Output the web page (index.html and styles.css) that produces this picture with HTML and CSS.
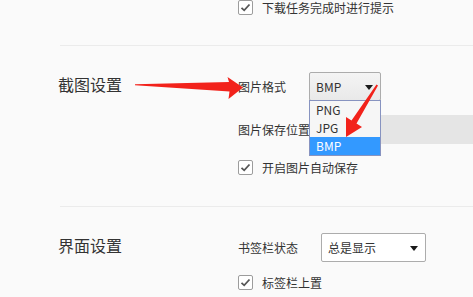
FILE: index.html
```html
<!DOCTYPE html>
<html lang="zh-CN">
<head>
<meta charset="utf-8">
<link rel="stylesheet" href="styles.css">
</head>
<body>
<div class="page">
  <section class="sec sec-top">
    <div class="side"></div>
    <div class="main">
      <div class="check-row check-first">
        <span class="cb"><svg width="13" height="13" viewBox="0 0 13 13"><path d="M2.5 6.8 L5.2 9.3 L10.5 3.5" fill="none" stroke="#555" stroke-width="1.8"/></svg></span>
        <span class="cb-text">下载任务完成时进行提示</span>
      </div>
    </div>
  </section>
  <div class="divider"></div>
  <section class="sec sec-shot">
    <div class="side"><h2 class="title">截图设置</h2></div>
    <div class="main">
      <div class="row">
        <span class="lbl">图片格式</span>
        <div class="select select-fmt">
          <span class="val">BMP</span><span class="caret"></span>
          <ul class="menu">
            <li>PNG</li>
            <li>JPG</li>
            <li class="on">BMP</li>
          </ul>
        </div>
      </div>
      <div class="row">
        <span class="lbl">图片保存位置</span>
        <div class="path"></div>
      </div>
      <div class="check-row">
        <span class="cb"><svg width="13" height="13" viewBox="0 0 13 13"><path d="M2.5 6.8 L5.2 9.3 L10.5 3.5" fill="none" stroke="#555" stroke-width="1.8"/></svg></span>
        <span class="cb-text">开启图片自动保存</span>
      </div>
    </div>
  </section>
  <div class="divider"></div>
  <section class="sec sec-ui">
    <div class="side"><h2 class="title">界面设置</h2></div>
    <div class="main">
      <div class="row">
        <span class="lbl">书签栏状态</span>
        <div class="select select-bar">
          <span class="val">总是显示</span><span class="caret"></span>
        </div>
      </div>
      <div class="check-row">
        <span class="cb"><svg width="13" height="13" viewBox="0 0 13 13"><path d="M2.5 6.8 L5.2 9.3 L10.5 3.5" fill="none" stroke="#555" stroke-width="1.8"/></svg></span>
        <span class="cb-text">标签栏上置</span>
      </div>
    </div>
  </section>
  <svg class="arrows" width="473" height="297" viewBox="0 0 473 297">
    <polygon points="135,84.2 229,82 227.5,77 243,87.5 228.5,99 229.5,91.5 135,85.2" fill="#f2221b"/>
    <polygon points="376.5,84.5 378,85.5 356.5,123.5 362,127 346,137 346,117 351.5,120.5" fill="#f2221b"/>
  </svg>
</div>
</body>
</html>
```

FILE: styles.css
```css
html, body {
  margin: 0;
  padding: 0;
  background: #fafafa;
}

.page {
  position: relative;
  width: 473px;
  height: 297px;
  overflow: hidden;
  background: #fafafa;
  font-family: "Noto Sans CJK SC", "Noto Sans", sans-serif;
  color: #333;
  font-size: 12px;
}

.sec {
  display: flex;
}

.side {
  width: 238px;
  flex: none;
  box-sizing: border-box;
  padding-left: 58px;
}

.main {
  flex: 1;
  display: flex;
  flex-direction: column;
}

.sec-top {
  padding-bottom: 30px;
}

.check-row.check-first {
  height: 15px;
}

.check-first .cb-text {
  line-height: 15px;
}

.sec-shot {
  padding-top: 26px;
  padding-bottom: 30px;
}

.sec-shot .main {
  gap: 14px;
}

.sec-shot .check-row {
  margin-top: 1px;
}

.sec-ui {
  padding-top: 26px;
}

.sec-ui .main {
  gap: 12px;
}

.divider {
  height: 1px;
  margin-left: 60px;
  background: #ebebeb;
}

.title {
  margin: -2px 0 0;
  font-size: 16px;
  font-weight: normal;
  line-height: 29px;
  color: #333;
}

.row {
  display: flex;
  align-items: center;
  height: 29px;
  gap: 23px;
}

.lbl {
  white-space: nowrap;
  line-height: 29px;
}

.select {
  position: relative;
  box-sizing: border-box;
  height: 29px;
  border: 1px solid #acacac;
  border-radius: 2px;
  display: flex;
  align-items: center;
  padding-left: 6px;
}

.select-fmt {
  width: 72px;
  background: linear-gradient(#f4f4f4, #e9e9e9);
}

.select-bar {
  width: 105px;
  background: #fff;
}

.caret {
  position: absolute;
  right: 7px;
  top: 12px;
  width: 0;
  height: 0;
  border-left: 4px solid transparent;
  border-right: 4px solid transparent;
  border-top: 5px solid #1a1a1a;
}

.menu {
  position: absolute;
  left: -1px;
  top: 27px;
  width: 72px;
  box-sizing: border-box;
  margin: 0;
  padding: 0;
  list-style: none;
  border: 1px solid #8793c0;
  background: #f6f6f6;
  z-index: 2;
}

.menu li {
  height: 18px;
  line-height: 18px;
  padding-left: 6px;
  color: #333;
}

.menu li.on {
  background: #3399ff;
  color: #fff;
}

.path {
  flex: 1;
  height: 29px;
  background: #e5e5e5;
}

.check-row {
  display: flex;
  align-items: center;
  height: 17px;
}

.cb {
  box-sizing: border-box;
  width: 15px;
  height: 15px;
  border: 1px solid #9c9c9c;
  border-radius: 2px;
  background: #fff;
  display: flex;
  align-items: center;
  justify-content: center;
  flex: none;
}

.cb-text {
  margin-left: 9px;
  line-height: 17px;
  white-space: nowrap;
}

.arrows {
  position: absolute;
  left: 0;
  top: 0;
  z-index: 5;
  pointer-events: none;
}
```
